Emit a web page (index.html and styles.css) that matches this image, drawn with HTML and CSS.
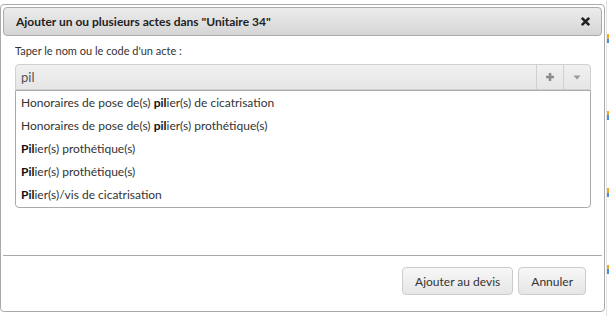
FILE: index.html
```html
<html>
<head>
    <link rel="stylesheet" href="styles.css">
</head>
<body>
    <div class="page">
        <div class="dialog">
            <div class="titlebar">
                <span class="title">Ajouter un ou plusieurs actes dans "Unitaire 34"</span>
                <svg class="close" width="11" height="11" viewBox="0 0 11 11">
                    <path d="M1.8 1.8 L9.2 9.2 M9.2 1.8 L1.8 9.2" stroke="#222" stroke-width="2.6"/>
                </svg>
            </div>
            <div class="content">
                <div class="label">Taper le nom ou le code d'un acte :</div>
                <div class="combo">
                    <div class="combo-text">pil</div>
                    <div class="combo-btn">
                        <svg width="10" height="10" viewBox="0 0 10 10">
                            <path d="M5 1 V9 M1 5 H9" stroke="#8c8c8c" stroke-width="2.6"/>
                        </svg>
                    </div>
                    <div class="combo-btn">
                        <svg width="8" height="5" viewBox="0 0 8 5">
                            <path d="M0.5 0.5 H7.5 L4 4.5 Z" fill="#999"/>
                        </svg>
                    </div>
                </div>
                <ul class="results">
                    <li>Honoraires de pose de(s) <b>pil</b>ier(s) de cicatrisation</li>
                    <li>Honoraires de pose de(s) <b>pil</b>ier(s) prothétique(s)</li>
                    <li><b>Pil</b>ier(s) prothétique(s)</li>
                    <li><b>Pil</b>ier(s) prothétique(s)</li>
                    <li><b>Pil</b>ier(s)/vis de cicatrisation</li>
                </ul>
            </div>
            <div class="footer">
                <button class="button">Ajouter au devis</button>
                <button class="button">Annuler</button>
            </div>
        </div>
        <div class="behind">
            <span class="mark"></span>
            <span class="mark"></span>
            <span class="mark"></span>
            <span class="mark"></span>
        </div>
    </div>
</body>
</html>
```
FILE: styles.css
```css
body {
    margin: 0;
    background-color: #fff;
    font-family: Lato, "Liberation Sans", sans-serif;
    font-size: 12px;
    color: #333;
}

.page {
    display: flex;
    height: 316px;
}

.dialog {
    box-sizing: border-box;
    width: 607px;
    height: 308px;
    margin-top: 4px;
    padding: 2px;
    border: 1px solid #aaa;
    border-radius: 4px;
    background-color: #fff;
    display: flex;
    flex-direction: column;
}

.titlebar {
    box-sizing: border-box;
    height: 29px;
    display: flex;
    align-items: center;
    justify-content: space-between;
    padding: 0 10px 0 12px;
    border: 1px solid #aaa;
    border-radius: 4px;
    background: linear-gradient(#ececec, #d5d5d5);
}

.title {
    font-size: 12px;
    font-weight: bold;
    color: #222;
}

.content {
    flex: 1;
    padding: 7px 11px 0 12px;
}

.label {
    height: 16px;
    line-height: 16px;
    margin-bottom: 5px;
    font-size: 11px;
    color: #333;
}

.combo {
    box-sizing: border-box;
    height: 26px;
    display: flex;
    border: 1px solid #d0d0d0;
    border-radius: 4px 4px 0 0;
    background: linear-gradient(#f0f0f0, #e6e6e6);
}

.combo-text {
    flex: 1;
    padding-left: 5px;
    line-height: 25px;
    font-size: 13px;
    color: #555;
}

.combo-btn {
    width: 26px;
    display: flex;
    align-items: center;
    justify-content: center;
    border-left: 1px solid #d0d0d0;
}

.results {
    list-style: none;
    margin: 0;
    padding: 0 0 1px 0;
    border: 1px solid #aaa;
    border-radius: 0 0 4px 4px;
}

.results li {
    height: 23px;
    line-height: 24px;
    padding-left: 5px;
    color: #333;
}

.results b {
    color: #111;
}

.footer {
    height: 54px;
    box-sizing: border-box;
    border-top: 1px solid #aaa;
    padding: 11px 16px 0 0;
    display: flex;
    justify-content: flex-end;
    align-items: flex-start;
    gap: 5px;
}

.button {
    height: 28px;
    padding: 0 12px;
    border: 1px solid #ccc;
    border-radius: 4px;
    background: linear-gradient(#f7f7f7, #e6e6e6);
    font-family: Lato, "Liberation Sans", sans-serif;
    font-size: 12px;
    color: #333;
}

.behind {
    flex: 1;
    display: flex;
    flex-direction: column;
    padding-top: 34px;
    gap: 68px;
    border-left: 1px solid #e4e4e4;
    margin-left: 1px;
}

.mark {
    display: block;
    width: 2px;
    height: 9px;
    background: linear-gradient(#f5a623 50%, #4a90d9 50%);
}
```
